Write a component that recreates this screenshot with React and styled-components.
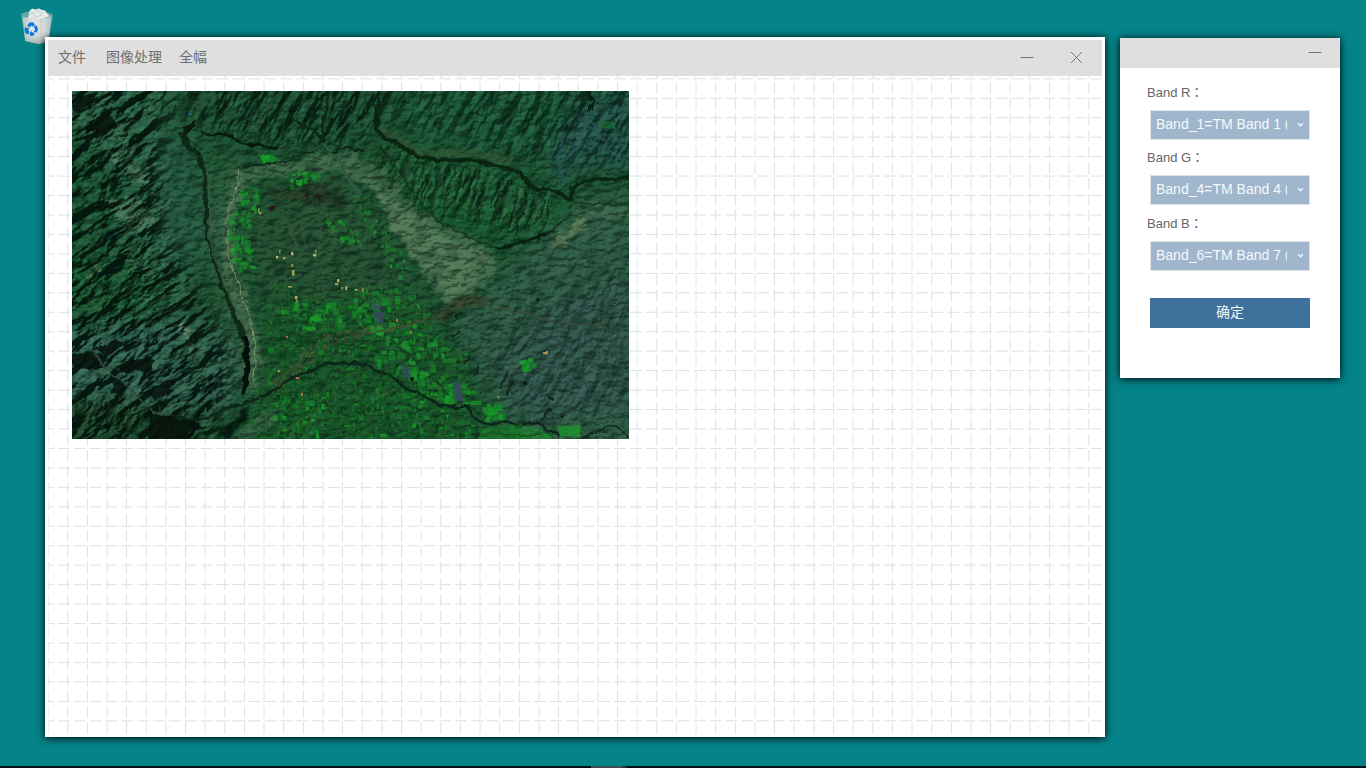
import React from "react";
import styled, { createGlobalStyle } from "styled-components";

const GlobalStyle = createGlobalStyle`
  html, body { margin: 0; padding: 0; }
  body { overflow: hidden; font-family: "Liberation Sans", "Noto Sans CJK SC", sans-serif; }
  * { box-sizing: border-box; }
`;

const Desktop = styled.div`
  position: relative;
  width: 1366px;
  height: 768px;
  overflow: hidden;
  background: #048388;
`;

const DesktopIcon = styled.div`
  position: absolute;
  left: 20px;
  top: 7px;
  svg { display: block; }
`;

const MainWindow = styled.section`
  position: absolute;
  left: 45px;
  top: 37px;
  width: 1060px;
  height: 700px;
  display: flex;
  flex-direction: column;
  border: 3px solid #fff;
  background: #fff;
  box-shadow: 0 1px 8px #000;
`;

const MenuBar = styled.header`
  display: flex;
  align-items: center;
  flex: 0 0 36px;
  padding: 0 18px 0 10px;
  background: #dfdfdf;
`;

const MenuItem = styled.span`
  margin-right: ${(p) => p.$gap}px;
  padding-bottom: 2px;
  font-size: 14px;
  line-height: 34px;
  color: #6e6e6e;
`;

const WindowButtons = styled.div`
  display: flex;
  align-items: center;
  gap: 36px;
  margin-left: auto;
`;

const Glyph = styled.svg`
  display: block;
  fill: none;
  stroke: #727272;
  stroke-width: 1;
`;

const Canvas = styled.div`
  flex: 1;
  min-height: 0;
  display: grid;
  > * { grid-area: 1 / 1; }
`;

const GridLines = styled.svg`
  display: block;
  fill: none;
  stroke: #d8e2ea;
`;

const MapImage = styled.svg`
  display: block;
  margin: 15px 0 0 24px;
  z-index: 1;
`;

const BandPanel = styled.aside`
  position: absolute;
  left: 1120px;
  top: 38px;
  width: 220px;
  height: 340px;
  background: #fff;
  box-shadow: 0 1px 8px #000;
`;

const PanelHeader = styled.header`
  display: flex;
  justify-content: flex-end;
  height: 30px;
  padding: 8px 18px 0 0;
  background: #dfdfdf;
`;

const BandForm = styled.div`
  display: flex;
  flex-direction: column;
  padding: 15px 30px 0;
`;

const BandLabel = styled.label`
  height: 27px;
  margin: ${(p) => p.$top || 0}px 0 0 -3px;
  font-family: "Liberation Sans", "Noto Sans CJK TC", sans-serif;
  font-size: 13px;
  line-height: 20px;
  color: #666;
  white-space: nowrap;
`;

const BandSelect = styled.div`
  display: flex;
  align-items: center;
  justify-content: space-between;
  height: 30px;
  padding: 0 5px;
  border: 1px solid #dfe4e9;
  background: #9fb6cd;
  color: #f6f9fc;
`;

const SelectValue = styled.span`
  width: 131px;
  padding-bottom: 2px;
  overflow: hidden;
  white-space: nowrap;
  font-size: 14px;
  line-height: 26px;
`;

const ConfirmButton = styled.button`
  height: 30px;
  margin-top: 27px;
  padding: 0 0 2px;
  border: 0;
  background: #3e719b;
  color: #f4f7fa;
  font-family: inherit;
  font-size: 14px;
  line-height: 28px;
`;

const TaskStrip = styled.footer`
  position: absolute;
  left: 0;
  right: 0;
  bottom: 0;
  height: 2px;
  padding-left: 591px;
  display: flex;
  background: #031014;
`;

const TaskMark = styled.span`
  width: ${(p) => p.$w}px;
  background: ${(p) => p.$c};
`;

function random(seed) {
  let s = seed;
  return () => {
    s = (s * 1664525 + 1013904223) >>> 0;
    return s / 4294967296;
  };
}

function inside(x, y, poly) {
  let hit = false;
  for (let i = 0, j = poly.length - 1; i < poly.length; j = i++) {
    const [xi, yi] = poly[i];
    const [xj, yj] = poly[j];
    if (yi > y !== yj > y && x < ((xj - xi) * (y - yi)) / (yj - yi) + xi) hit = !hit;
  }
  return hit;
}

const FARMLAND = [
  [200, 190], [240, 205], [290, 192], [328, 196], [360, 222], [374, 255], [400, 262],
  [392, 290], [408, 330], [440, 338], [510, 334], [512, 348], [165, 348], [180, 315], [188, 280], [190, 235],
];
const WEST_FIELDS = [[168, 98], [186, 92], [184, 118], [172, 142], [180, 178], [160, 176], [154, 150], [156, 122]];
const EAST_FIELDS = [[276, 96], [288, 108], [308, 134], [334, 168], [338, 188], [352, 215], [340, 212], [318, 176], [300, 148], [280, 118]];
const TOP_FIELDS = [[217, 83], [240, 77], [246, 82], [240, 88], [216, 95]];
const INNER_FIELDS = [[250, 120], [262, 126], [284, 138], [290, 152], [276, 150], [256, 140]];

function scatter(poly, count, seed, palette, min, max, fade) {
  const r = random(seed);
  const xs = poly.map((p) => p[0]);
  const ys = poly.map((p) => p[1]);
  const x0 = Math.min(...xs), x1 = Math.max(...xs), y0 = Math.min(...ys), y1 = Math.max(...ys);
  const out = [];
  for (let i = 0; i < count; i++) {
    const x = x0 + r() * (x1 - x0);
    const y = y0 + r() * (y1 - y0);
    const w = min + r() * r() * (max - min);
    const h = min + r() * r() * (max - min);
    const c = palette[Math.floor(r() * palette.length)];
    const o = fade + r() * (1 - fade);
    if (inside(x, y, poly)) out.push({ x, y, w, h, c, o });
  }
  return out;
}

const GREENS = ["#158a26", "#1b6b26", "#156524", "#178424", "#245c28", "#204e32", "#34602e", "#175326", "#2a4c30", "#1d4a2a"];
const BRIGHT = ["#159a26", "#188628", "#1ba52c", "#1b7b2e"];

const fields = [
  ...scatter(FARMLAND, 5200, 7, GREENS, 1, 7, 0.3),
  ...scatter([[290, 235], [335, 228], [372, 255], [398, 300], [400, 315], [360, 306], [330, 285], [300, 265]], 190, 23, BRIGHT, 3, 14, 0.35),
  ...scatter([[203, 222], [225, 205], [262, 208], [270, 230], [240, 240]], 60, 29, BRIGHT, 3, 11, 0.3),
  ...scatter([[268, 204], [320, 196], [330, 222], [285, 232]], 70, 30, BRIGHT, 3, 9, 0.3),
  ...scatter([[200, 300], [330, 300], [400, 330], [400, 346], [200, 346]], 110, 36, BRIGHT, 2, 7, 0.3),
  ...scatter(FARMLAND, 650, 31, ["#3c4a50", "#5b6742", "#1f3434", "#706548"], 0.8, 3, 0.3),
  ...scatter(WEST_FIELDS, 190, 37, BRIGHT, 2, 9, 0.2),
  ...scatter(EAST_FIELDS, 340, 41, BRIGHT, 2, 8, 0.2),
  ...scatter(TOP_FIELDS, 60, 43, BRIGHT, 2, 8, 0.5),
  ...scatter(INNER_FIELDS, 80, 47, BRIGHT, 2, 7, 0.3),
  ...scatter([[410, 314], [424, 312], [430, 322], [424, 328], [412, 328]], 40, 53, BRIGHT, 4, 8, 0.6),
  ...scatter([[446, 270], [456, 266], [462, 274], [452, 280]], 50, 59, BRIGHT, 3, 6, 0.7),
  ...scatter([[188, 64], [201, 63], [201, 68], [190, 69]], 30, 61, BRIGHT, 3, 6, 0.7),
];

const town = scatter(
  [[192, 296], [222, 270], [250, 244], [290, 236], [345, 228], [345, 234], [290, 244], [256, 256], [226, 284], [206, 300]],
  3600, 67, ["#6d4b3b", "#50443a", "#855b45", "#3e3a30", "#a76a50"], 0.7, 2.4, 0.3
);

const YELLOW = [
  [186, 117, 2, 6], [187, 121, 3, 3], [204, 165, 3, 3], [207, 159, 2, 5], [211, 166, 3, 3], [219, 161, 3, 4],
  [219, 173, 3, 4], [220, 179, 3, 7], [241, 163, 4, 3], [243, 159, 2, 4], [216, 195, 5, 2], [223, 205, 3, 4],
  [224, 209, 2, 3], [263, 192, 4, 3], [265, 188, 3, 4], [269, 196, 3, 3], [273, 195, 3, 5], [283, 198, 3, 2],
  [290, 197, 2, 5], [471, 261, 4, 3], [474, 260, 2, 4], [425, 305, 3, 2], [338, 240, 2, 3], [206, 279, 2, 3],
];

const ridgeRandom = random(97);
function gullies(anchor, count, length, lean, spread) {
  const out = [];
  for (let i = 0; i < count; i++) {
    const t = (i / count) * (anchor.length - 1);
    const k = Math.floor(t);
    const f = t - k;
    const x = anchor[k][0] * (1 - f) + anchor[k + 1][0] * f + (ridgeRandom() - 0.5) * spread;
    const y = anchor[k][1] * (1 - f) + anchor[k + 1][1] * f + (ridgeRandom() - 0.5) * spread;
    const l = length * (0.5 + ridgeRandom() * 0.8);
    const a = (ridgeRandom() - 0.5) * 5;
    out.push(`M${x.toFixed(1)} ${y.toFixed(1)}q${(a + lean * 0.2).toFixed(1)} ${(l * 0.4).toFixed(1)} ${(lean * 0.5).toFixed(1)} ${(l * 0.6).toFixed(1)}t${(lean * 0.5).toFixed(1)} ${(l * 0.4).toFixed(1)}`);
  }
  return out.join("");
}

const SCARP_GULLIES = gullies([[318, 58], [345, 74], [380, 78], [420, 82], [455, 98], [478, 108]], 40, 34, -10, 7);
const LOWER_GULLIES = gullies([[335, 92], [370, 108], [400, 114], [430, 122], [452, 124]], 26, 17, -8, 16);
const NORTH_GULLIES = gullies([[112, 12], [160, 8], [200, 18], [250, 6], [300, 14]], 30, 20, -11, 26);
const EAST_NORTH_GULLIES = gullies([[410, 14], [450, 10], [480, 24], [510, 12]], 20, 22, -11, 26);
const WEST_GULLIES = gullies([[30, 12], [46, 38], [66, 76], [88, 112], [62, 148], [82, 184], [92, 220]], 62, 9, -15, 28);
const LEFT_GULLIES = gullies([[0, 165], [40, 190], [80, 222], [120, 245], [150, 270]], 56, 11, -17, 60);
const SOUTH_GULLIES = gullies([[14, 300], [48, 318], [88, 322], [125, 330]], 26, 20, -9, 22);

const RIDGE_WEST = "M108 42Q116 56 126 65Q136 80 134 99Q133 120 135 134Q138 154 143 170L149 190Q157 210 163 224Q171 238 173 258L175 280L172 304";
const SCARP = "M306 8L305 39Q312 48 321 50L348 66Q372 70 401 69Q428 74 448 82L458 96L485 100L498 109L501 97Q510 89 522 89L557 86";
const RIVER = "M98 324L118 328L135 327L150 319L175 312L194 304L208 296L221 286L236 282L250 274L275 271L290 272L315 284L325 289L336 299L354 306L368 314L395 317L403 326L411 333L422 334L435 331L448 336L458 332L468 332L476 338L486 346";

function ReliefFilter({ id, frequency, seed, scale, azimuth, matrix }) {
  return (
    <filter id={id} x="0" y="0" width="100%" height="100%" colorInterpolationFilters="sRGB">
      <feTurbulence type="fractalNoise" baseFrequency={frequency} numOctaves="4" seed={seed} result="n" />
      <feColorMatrix in="n" values="0 0 0 0 0  0 0 0 0 0  0 0 0 0 0  1 0 0 0 0" result="h" />
      <feDiffuseLighting in="h" surfaceScale={scale} diffuseConstant="0.72" lightingColor="#ffffff" result="lit">
        <feDistantLight azimuth={azimuth} elevation="44" />
      </feDiffuseLighting>
      <feColorMatrix in="lit" values={matrix} />
    </filter>
  );
}

const SHADE = "0 0 0 0 0.02  0 0 0 0 0.085  0 0 0 0 0.055  -2.6 0 0 0 1.22";
const SHINE = "0 0 0 0 0.42  0 0 0 0 0.62  0 0 0 0 0.49  1.9 0 0 0 -1.02";

function Satellite() {
  return (
    <MapImage width="557" height="348" viewBox="0 0 557 348">
      <defs>
        <clipPath id="frame"><rect width="557" height="348" /></clipPath>
        <filter id="soft" x="-20%" y="-20%" width="140%" height="140%" colorInterpolationFilters="sRGB"><feGaussianBlur stdDeviation="9" /></filter>
        <filter id="edge" x="-20%" y="-20%" width="140%" height="140%" colorInterpolationFilters="sRGB">
          <feTurbulence type="fractalNoise" baseFrequency="0.09" numOctaves="3" seed="4" result="n" />
          <feDisplacementMap in="SourceGraphic" in2="n" scale="14" xChannelSelector="R" yChannelSelector="G" result="d" />
          <feGaussianBlur in="d" stdDeviation="1.3" />
        </filter>
        <filter id="rough" x="-5%" y="-5%" width="110%" height="110%" colorInterpolationFilters="sRGB">
          <feTurbulence type="fractalNoise" baseFrequency="0.1" numOctaves="3" seed="12" result="n" />
          <feDisplacementMap in="SourceGraphic" in2="n" scale="7" xChannelSelector="R" yChannelSelector="G" result="d" />
          <feGaussianBlur in="d" stdDeviation="0.45" />
        </filter>
        <ReliefFilter id="westShade" frequency="0.035 0.085" seed="9" scale="15" azimuth="60" matrix={SHADE} />
        <ReliefFilter id="westShine" frequency="0.035 0.085" seed="9" scale="15" azimuth="60" matrix={SHINE} />
        <ReliefFilter id="northShade" frequency="0.025 0.085" seed="21" scale="11" azimuth="80" matrix={SHADE} />
        <ReliefFilter id="northShine" frequency="0.025 0.085" seed="21" scale="11" azimuth="80" matrix={SHINE} />
        <ReliefFilter id="fineShade" frequency="0.11 0.16" seed="5" scale="4.5" azimuth="60" matrix={SHADE} />
        <ReliefFilter id="fineShine" frequency="0.11 0.16" seed="5" scale="4.5" azimuth="60" matrix={SHINE} />
        <filter id="mottle" x="0" y="0" width="100%" height="100%" colorInterpolationFilters="sRGB">
          <feTurbulence type="fractalNoise" baseFrequency="0.07" numOctaves="5" seed="3" />
          <feColorMatrix values="0 0 0 0 0.03  0 0 0 0 0.14  0 0 0 0 0.08  0 2.6 0 0 -1.15" />
        </filter>
        <mask id="westMask">
          <g filter="url(#soft)">
            <path d="M-20 -20H108L95 30L90 75L92 130L110 170L148 235L162 290L150 325L140 370H-20Z" fill="#fff" />
          </g>
        </mask>
        <mask id="northMask">
          <g filter="url(#soft)">
            <path d="M106 -20H330L300 50L240 58L170 45L120 35Z" fill="#eee" />
            <path d="M318 -20H580V72L515 80L455 72L400 55L320 35Z" fill="#999" />
            <path d="M315 58L455 88L488 112L440 140L375 118Z" fill="#bbb" />
            <path d="M440 215L560 170V330L450 320L400 270Z" fill="#555" />
          </g>
        </mask>
      </defs>
      <g clipPath="url(#frame)">
        <rect width="557" height="348" fill="#1f5533" />
        <g filter="url(#soft)">
          <path d="M-20 -20H90L130 80L130 170L90 230L-20 160Z" fill="#286144" />
          <path d="M-20 40L40 70L60 110L20 170L-20 180Z" fill="#185330" />
          <path d="M68 45L112 48L134 90L136 170L100 175L70 110Z" fill="#285e45" />
          <path d="M-20 160L60 150L120 240L60 250L-20 230Z" fill="#15562d" />
          <path d="M-20 235L110 220L170 260L160 320L60 330L-20 300Z" fill="#2f6151" />
          <path d="M-20 305L150 325L140 370H-20Z" fill="#184628" />
          <path d="M110 -20H310L300 45L150 60Z" fill="#1c5335" />
          <path d="M320 -20H580V60L500 80L400 60L330 45Z" fill="#1d5d3c" />
          <path d="M500 10L580 -5V80L510 75L485 100L480 60Z" fill="#265a4f" />
          <path d="M310 48L450 84L500 108L460 148L420 155L350 118Z" fill="#1b6035" />
          <path d="M450 165L520 105L580 105V370H460L400 270L380 230Z" fill="#315f49" />
          <path d="M440 250L500 205L560 190V320L460 330L425 290Z" fill="#365c54" />
          <path d="M190 100L260 75L310 145L345 205L290 230L195 215L180 150Z" fill="#265234" />
          <path d="M200 205L350 215L400 300L400 360H175L195 260Z" fill="#175429" />
          <path d="M155 80L170 60L150 180L181 280L171 303L148 210L140 130Z" fill="#3a684a" />
        </g>

        <g filter="url(#edge)">
          <path d="M268 62L301 70L341 113L365 131L421 158L425 179L401 202L378 219L358 196L348 172L321 139L301 99L268 79L230 80L180 90L170 105L161 135L167 180L183 230L189 270L180 305L175 280L171 240L155 205L147 164L153 120L163 77L200 73L244 64Z" fill="#557a5a" opacity="0.62" />
          <path d="M300 95L336 122L382 151L418 166L400 194L379 211L354 179L324 145Z" fill="#74946d" opacity="0.4" />
          <path d="M511 124L475 152L485 161L515 136Z" fill="#739069" opacity="0.65" />
          <path d="M505 118L530 113L557 117V128L520 127Z" fill="#4a704d" opacity="0.5" />
          <path d="M364 221L380 211L401 202L418 207L408 215L390 216L368 232Z" fill="#343b29" opacity="0.75" />
          <path d="M196 98L240 92L270 102L276 118L240 112L201 107Z" fill="#26301f" opacity="0.55" />
          <path d="M145 348L160 328L177 314L172 330L157 348Z" fill="#071a11" />
          <path d="M164 348L178 326L200 318L205 330L180 348Z" fill="#50755a" opacity="0.65" />
          <path d="M24 50L55 70L74 84L73 94L46 77Z" fill="#769783" opacity="0.45" />
          <path d="M30 108L70 110L84 128L73 144L43 124Z" fill="#829e83" opacity="0.38" />
          <path d="M108 229L119 242L119 259L109 243Z" fill="#86a985" opacity="0.65" />
          <path d="M14 184L31 174L26 185L15 190Z" fill="#8cab80" opacity="0.75" />
        </g>

        <rect width="557" height="348" filter="url(#mottle)" opacity="0.4" />
        <rect width="557" height="348" filter="url(#fineShade)" opacity="0.42" />
        <rect width="557" height="348" filter="url(#fineShine)" opacity="0.32" />

        <g mask="url(#westMask)">
          <g transform="rotate(-32 80 170)">
            <rect x="-180" y="-60" width="460" height="460" filter="url(#westShade)" opacity="0.95" />
            <rect x="-180" y="-60" width="460" height="460" filter="url(#westShine)" opacity="0.7" />
          </g>
        </g>
        <g mask="url(#northMask)">
          <g transform="rotate(-60 330 170)">
            <rect x="0" y="-200" width="650" height="700" filter="url(#northShade)" opacity="0.85" />
            <rect x="0" y="-200" width="650" height="700" filter="url(#northShine)" opacity="0.4" />
          </g>
        </g>

        <g filter="url(#rough)" fill="none">
          <g stroke="#06170c" strokeWidth="1.8" opacity="0.55">
            <path d={SCARP_GULLIES} opacity="0.8" />
            <path d={NORTH_GULLIES} opacity="0.6" />
            <path d={EAST_NORTH_GULLIES} opacity="0.6" />
            <path d={WEST_GULLIES} />
            <path d={LEFT_GULLIES} strokeWidth="2.4" opacity="0.8" />
            <path d={SOUTH_GULLIES} strokeWidth="4" />
            <path d={LOWER_GULLIES} strokeWidth="1" opacity="0.6" />
          </g>
          <g stroke="#5b8f69" strokeWidth="1.1" opacity="0.5" transform="translate(2.4 1.4)">
            <path d={SCARP_GULLIES} opacity="0.75" />
            <path d={NORTH_GULLIES} opacity="0.3" />
            <path d={WEST_GULLIES} />
            <path d={LEFT_GULLIES} opacity="0.6" />
            <path d={SOUTH_GULLIES} opacity="0.6" />
          </g>
          <g fill="#07130c" opacity="0.86">
            <path d="M0 264L22 260L34 268L30 278L12 278L0 273Z" />
            <path d="M24 255L45 249L52 253L42 262L31 265Z" />
            <path d="M42 275L66 267L83 269L80 279L57 282Z" />
            <path d="M77 303L94 290L105 287L98 301L83 310Z" />
            <path d="M40 292L53 290L52 300L39 302Z" />
            <path d="M77 321L96 327L122 329L133 339L117 337L112 348H76Z" />
            <path d="M0 10L16 3L28 1L20 14L6 22L0 20Z" />
            <path d="M14 36L37 25L46 32L34 43L20 41Z" />
            <path d="M112 36L124 29L120 38L109 49Z" />
          </g>
          <path d="M20 259L34 278L54 293L68 308L82 321L100 325" stroke="#31473b" strokeWidth="2" />
        </g>

        <g>
          {fields.map((f, i) => (
            <rect key={i} x={f.x} y={f.y} width={f.w} height={f.h} fill={f.c} opacity={f.o * 0.8} />
          ))}
        </g>
        <g opacity="0.75">
          {town.map((f, i) => (
            <rect key={i} x={f.x} y={f.y} width={f.w} height={f.h} fill={f.c} opacity={f.o} />
          ))}
        </g>
        <g fill="#344a5b" opacity="0.85">
          <path d="M299 213L310 214L309 219L299 219Z" />
          <path d="M328 272L336 276L340 287L331 286Z" />
          <path d="M381 290L389 292L392 311L383 309Z" />
          <path d="M302 221L312 221L311 233L303 231Z" />
        </g>
        <g fill="#d4bd60" opacity="0.9">
          {YELLOW.map(([x, y, w, h], i) => <rect key={i} x={x} y={y} width={w * 0.8} height={h * 0.8} opacity={0.6 + (i % 3) * 0.2} />)}
        </g>

        <g filter="url(#rough)" fill="none" strokeLinejoin="round">
          <path d={RIDGE_WEST} stroke="#0b2313" strokeWidth="4.8" opacity="0.88" />
          <path d="M136 80L139 155L157 205L177 242L178 297" stroke="#42634a" strokeWidth="3" opacity="0.6" />
          <path d="M166 78L164 103L155 120L155 158L160 177L175 219L184 254L182 290" stroke="#8ca27b" strokeWidth="1" opacity="0.8" />
          <path d="M174 246L175 277L172 303" stroke="#04100a" strokeWidth="5" />
          <path d="M171 75L190 73L211 71L230 63L247 60" stroke="#102719" strokeWidth="1.8" />
          <path d="M128 40L136 44L144 42L157 44L168 53L178 54L189 54L204 58" stroke="#07190f" strokeWidth="2.5" />
          <path d="M257 0L250 37L252 53" stroke="#0b2516" strokeWidth="2.8" />
          <path d="M252 53L266 66L276 88L290 104" stroke="#2d5544" strokeWidth="3" />
          <path d="M223 30L242 39L250 47M260 62L270 57L292 60" stroke="#0b2516" strokeWidth="2.2" />
          <path d="M305 37L324 47L350 62L400 62L440 71" stroke="#3a5535" strokeWidth="7" opacity="0.45" />
          <path d={SCARP} stroke="#08200f" strokeWidth="4.2" opacity="0.9" />
          <path d="M306 53L325 78L344 106L365 130L388 141L421 157L448 153L481 140L498 122" stroke="#12291a" strokeWidth="2" opacity="0.7" />
          <path d="M423 158L440 154L478 142" stroke="#08190f" strokeWidth="3" opacity="0.8" />
          <path d="M507 112L520 113L536 113L557 115" stroke="#163a20" strokeWidth="1.8" />
          <path d="M492 93L487 70L490 42M490 72L508 55L514 25L540 62L557 73" stroke="#2d5461" strokeWidth="2" opacity="0.7" />
          <path d="M514 0L522 11L517 22" stroke="#091e13" strokeWidth="3" />
          <path d={RIVER} stroke="#0c2518" strokeWidth="2.8" />
          <path d="M256 280L280 281L296 278M244 290L236 306M336 297L325 286M375 303L368 294L344 270L318 248" stroke="#173d22" strokeWidth="1.7" />
          <path d="M283 246L340 233L366 225L382 217L408 213L450 222L483 231L530 233L557 252" stroke="#3e4e36" strokeWidth="2" opacity="0.75" />
          <path d="M325 183L319 194L342 205L349 218M341 236L340 270M368 248L367 278" stroke="#174628" strokeWidth="2" opacity="0.8" />
          <path d="M383 228L391 222M387 240L379 246M398 264L391 274M435 282L428 298M440 289L436 306M480 318L468 330M477 304L482 310M409 274L403 284" stroke="#0b2015" strokeWidth="2.2" opacity="0.85" />
          <path d="M448 205L468 240L497 255L507 277L518 302L548 318M539 244L552 288M514 190L483 220M539 200L495 242" stroke="#274a42" strokeWidth="2" opacity="0.75" />
          <path d="M225 158L218 135L211 122M235 158L228 128M247 159L249 132M264 154L258 137" stroke="#3e5940" strokeWidth="2" opacity="0.6" />
          <path d="M203 117L197 119M236 103V110M246 104V108" stroke="#31120e" strokeWidth="2.4" />
          <path d="M403 345L421 341L437 344L470 343M508 348L524 340L545 335L557 347" stroke="#132b18" strokeWidth="2" />
        </g>
        <path d="M411 337L437 333L465 336L480 346V348H405Z" fill="#1c9c2b" opacity="0.4" />
        <path d="M485 335L508 334V346L488 345Z" fill="#1e982b" opacity="0.7" />
        <path d="M524 31L541 30L544 38L530 37Z" fill="#1b7b35" opacity="0.5" />
        <g fill="#07150f"><circle cx="466" cy="209" r="1.4" /><circle cx="453" cy="292" r="1.8" /><circle cx="490" cy="326" r="1.2" /><circle cx="340" cy="288" r="2" /></g>
        <circle cx="118.5" cy="23.5" r="1.1" fill="#317bd4" />
        <g fill="#bd6546"><rect x="214" y="245" width="2" height="2" /><rect x="324" y="228" width="2" height="3" /><rect x="224" y="286" width="3" height="2" /><rect x="229" y="302" width="2" height="3" /></g>
      </g>
    </MapImage>
  );
}

const COLUMNS = Array.from({ length: 54 }, (_, i) => 0.1 + i * 19.635);
const ROWS = Array.from({ length: 34 }, (_, i) => 2.8 + i * 19.455);

function RecycleBin() {
  return (
    <svg width="34" height="38" viewBox="0 0 34 38">
      <defs>
        <linearGradient id="binFront" x1="0" x2="1">
          <stop offset="0" stopColor="#b5c8cb" />
          <stop offset="0.35" stopColor="#dfe3e4" />
          <stop offset="0.75" stopColor="#d5d8d9" />
          <stop offset="1" stopColor="#a9bfc1" />
        </linearGradient>
        <linearGradient id="binShade" x1="0" y1="0" x2="0" y2="1">
          <stop offset="0.4" stopColor="#fff" stopOpacity="0" />
          <stop offset="1" stopColor="#819092" stopOpacity="0.65" />
        </linearGradient>
      </defs>
      <path d="M1 6.5L9 4.2L27 5L33 7.8L28.6 34.5L19 37L5 34Z" fill="#75a9ac" opacity="0.85" />
      <path d="M8 11L9.5 4L12 1.6L15 2.6L19 1.6L22 3L25 3.2L27 6.5L29.5 9L22 12L10 13Z" fill="#e8eaea" />
      <path d="M10 4.5l4 2 4-3.5 3 4 4-2.5M9 9l4-3 3 4 6-2" fill="none" stroke="#b9c4c5" strokeWidth="0.8" />
      <path d="M2.6 10L9 11L14 9.5L21 12.5L31.6 9L28.3 34L19 37L5.4 34Z" fill="url(#binFront)" />
      <path d="M2.6 10L9 11L14 9.5L21 12.5L31.6 9L28.3 34L19 37L5.4 34Z" fill="url(#binShade)" />
      <path d="M21 12.5L19.5 36.8" stroke="#c8cfd0" strokeWidth="0.7" />
      <g fill="#1479d4">
        <path d="M7.2 18.5L9.5 15.5L13.2 15.3L15 17.8L13 19.8L11.3 18.4L9.6 20.6Z" />
        <path d="M13.6 19.6L16.5 18.3L18.1 22.2L16.5 25.7L13.8 24.7L15.2 22.2Z" />
        <path d="M5 20.3L9.3 21.2L8.2 22.6L9.2 25L8.5 27.8L5.3 25.9L4.4 22.6Z" />
        <path d="M9.8 25.8L11.5 23.6V25L14.8 25.9L13.5 28.7L10 28.9Z" />
      </g>
    </svg>
  );
}

const BANDS = [
  { name: "Band R：", value: "Band_1=TM Band 1 (Blue)", top: 0 },
  { name: "Band G：", value: "Band_4=TM Band 4 (Near Infrared)", top: 8 },
  { name: "Band B：", value: "Band_6=TM Band 7 (Shortwave Infrared)", top: 9 },
];

export default function App() {
  return (
    <>
      <GlobalStyle />
      <Desktop>
        <DesktopIcon><RecycleBin /></DesktopIcon>
        <MainWindow>
          <MenuBar>
            <MenuItem $gap={20}>文件</MenuItem>
            <MenuItem $gap={17}>图像处理</MenuItem>
            <MenuItem $gap={0}>全幅</MenuItem>
            <WindowButtons>
              <Glyph width="14" height="14"><path d="M0.5 6.5H13.5" /></Glyph>
              <Glyph width="14" height="14"><path d="M1 1L12 12M12 1L1 12" /></Glyph>
            </WindowButtons>
          </MenuBar>
          <Canvas>
            <GridLines width="1054" height="658" viewBox="0 0 1054 658">
              {COLUMNS.map((x) => <path key={x} d={`M${x} -10V658`} strokeDasharray="12 4" />)}
              {ROWS.map((y) => <path key={y} d={`M-5.9 ${y}H1054`} strokeDasharray="12 3.885" />)}
            </GridLines>
            <Satellite />
          </Canvas>
        </MainWindow>
        <BandPanel>
          <PanelHeader>
            <Glyph width="14" height="14"><path d="M0.5 6.5H13.5" /></Glyph>
          </PanelHeader>
          <BandForm>
            {BANDS.map((b) => (
              <React.Fragment key={b.name}>
                <BandLabel $top={b.top}>{b.name}</BandLabel>
                <BandSelect>
                  <SelectValue>{b.value}</SelectValue>
                  <svg width="7" height="6" viewBox="0 0 7 6" fill="none" stroke="#f6f9fc" strokeWidth="1.3">
                    <path d="M1 1.2L3.5 3.8L6 1.2" />
                  </svg>
                </BandSelect>
              </React.Fragment>
            ))}
            <ConfirmButton>确定</ConfirmButton>
          </BandForm>
        </BandPanel>
        <TaskStrip>
          <TaskMark $w={32} $c="#414c50" />
          <TaskMark $w={4} $c="#252f33" />
        </TaskStrip>
      </Desktop>
    </>
  );
}
